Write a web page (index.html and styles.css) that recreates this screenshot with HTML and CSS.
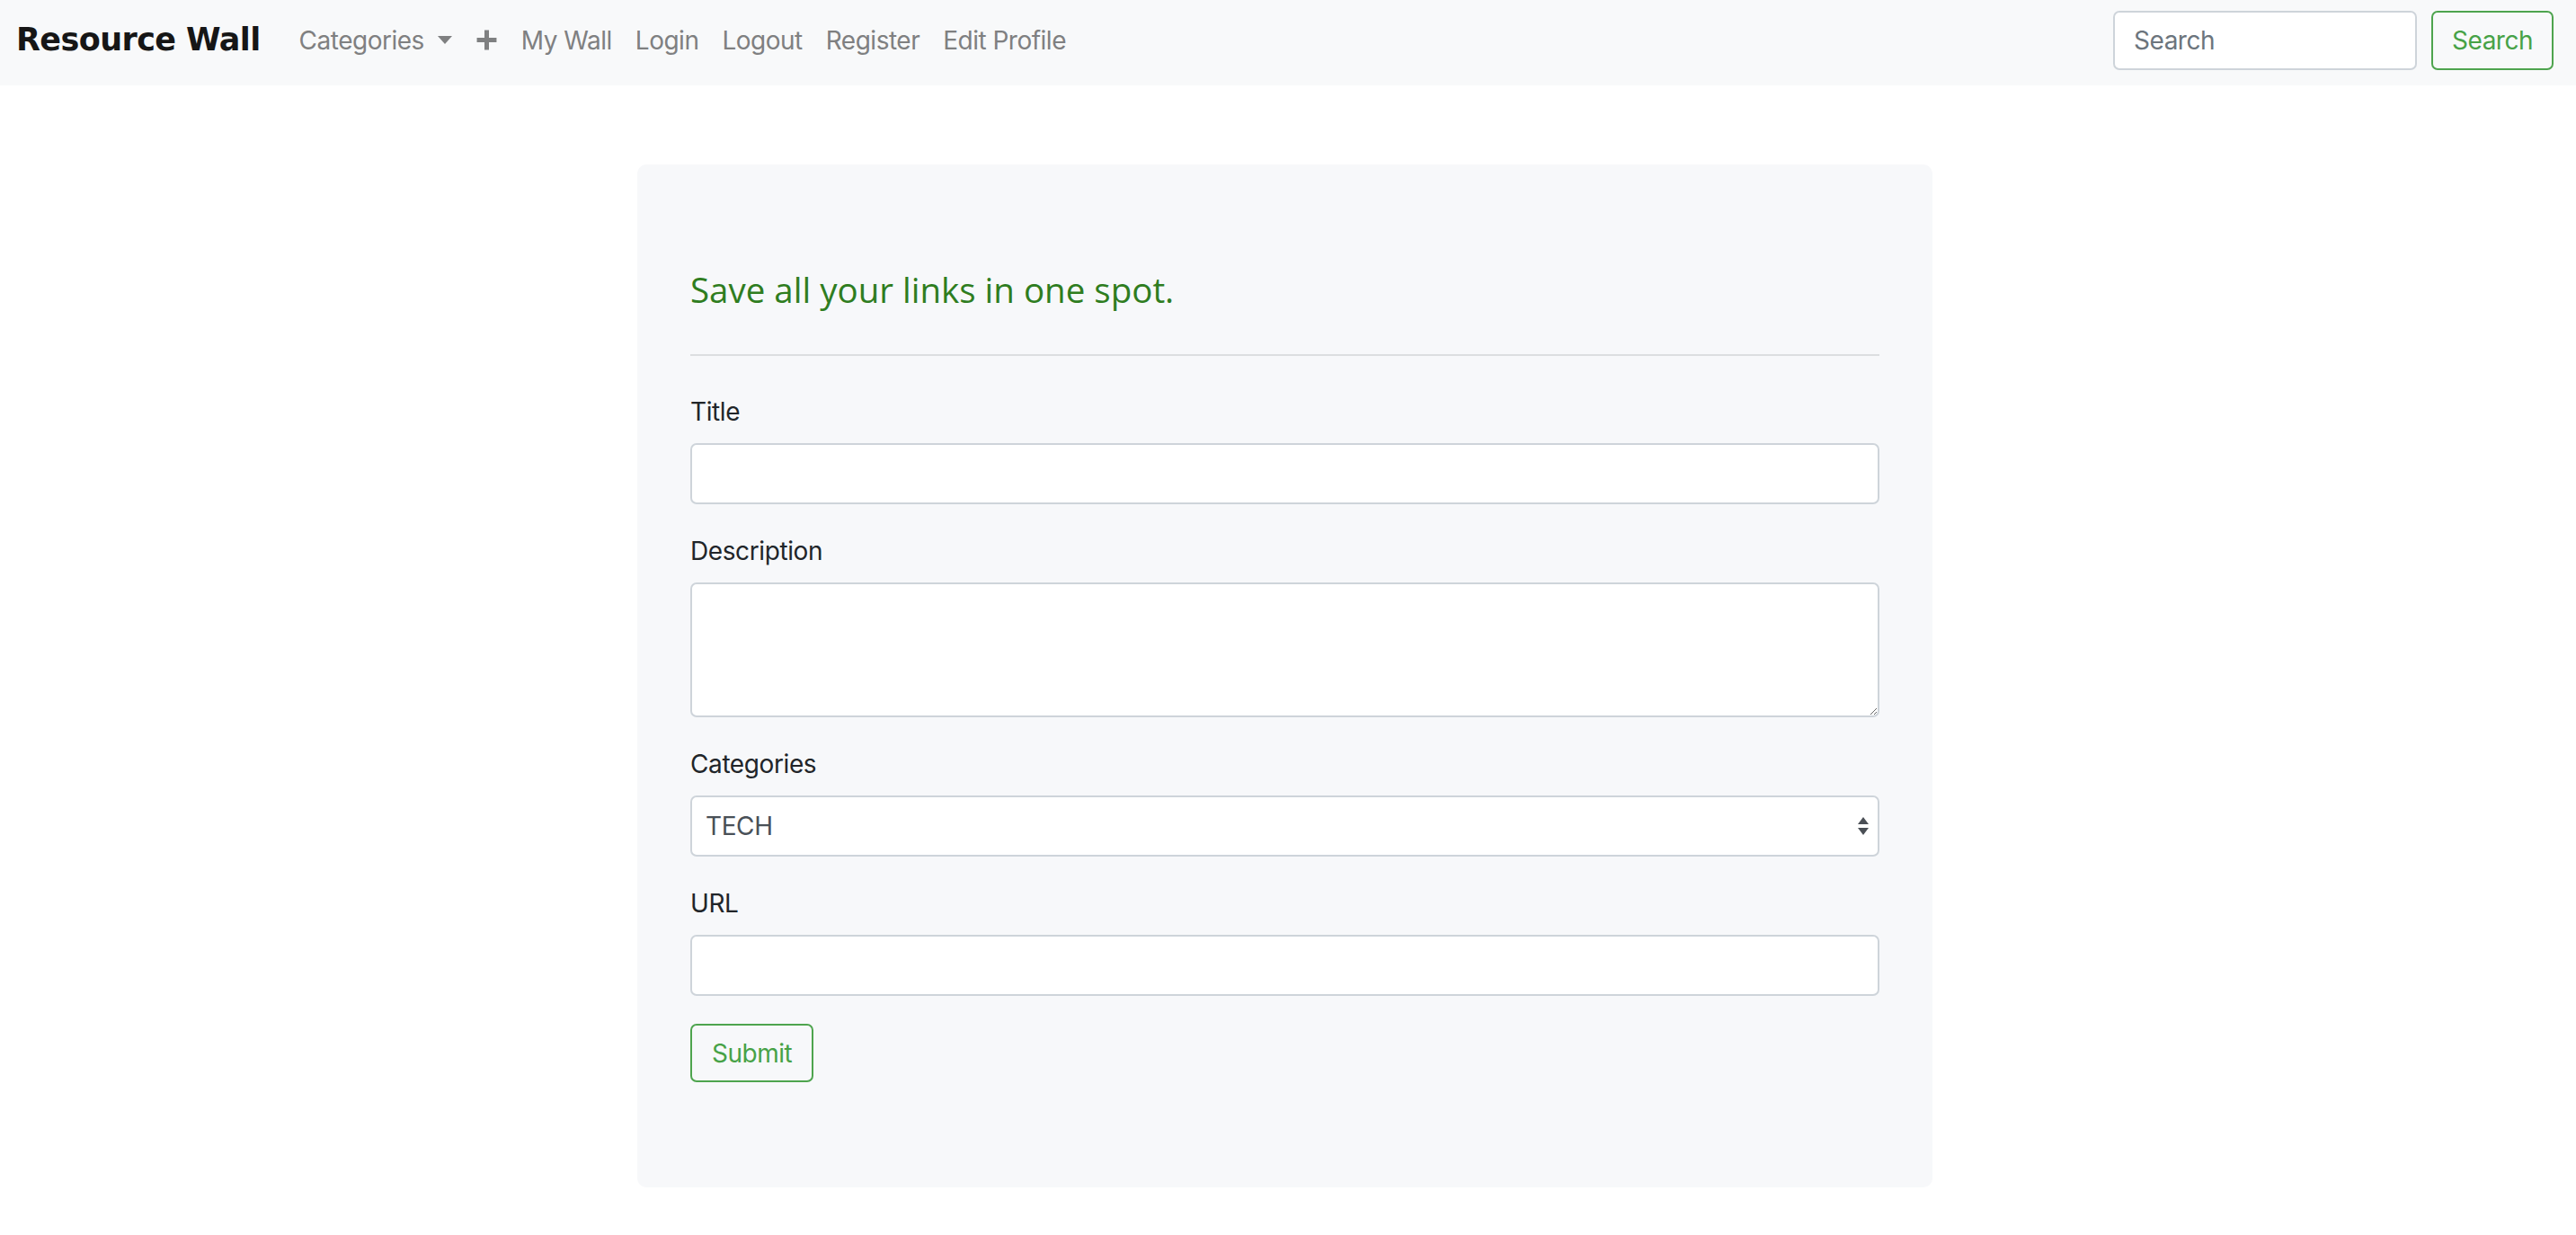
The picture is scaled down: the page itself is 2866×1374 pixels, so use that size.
FILE: index.html
```html
<!DOCTYPE html>
<html lang="en">
<head>
<meta charset="utf-8">
<title>Resource Wall</title>
<link rel="stylesheet" href="styles.css">
</head>
<body>
<nav class="navbar">
  <a class="brand" href="#">Resource Wall</a>
  <ul class="nav">
    <li><a class="nav-link dropdown" href="#">Categories<span class="caret"></span></a></li>
    <li><a class="nav-link plus" href="#" aria-label="Add"><svg width="25" height="25" viewBox="0 0 24 24"><path d="M9.6 1.5h4.8v8.1h8.1v4.8h-8.1v8.1h-4.8v-8.1h-8.1v-4.8h8.1z" fill="#7f8081"/></svg></a></li>
    <li><a class="nav-link" href="#">My Wall</a></li>
    <li><a class="nav-link" href="#">Login</a></li>
    <li><a class="nav-link" href="#">Logout</a></li>
    <li><a class="nav-link" href="#">Register</a></li>
    <li><a class="nav-link" href="#">Edit Profile</a></li>
  </ul>
  <form class="search-form">
    <input class="search-input" type="text" placeholder="Search">
    <button class="btn btn-outline" type="button">Search</button>
  </form>
</nav>

<main class="container">
  <section class="card">
    <h5 class="card-title">Save all your links in one spot.</h5>
    <hr class="divider">
    <form class="resource-form">
      <div class="form-group">
        <label class="label">Title</label>
        <input class="form-control" type="text">
      </div>
      <div class="form-group">
        <label class="label">Description</label>
        <textarea class="form-control textarea"></textarea>
      </div>
      <div class="form-group">
        <label class="label">Categories</label>
        <div class="select-wrap">
          <select class="form-control select">
            <option>TECH</option>
          </select>
          <svg class="select-arrows" width="14" height="22" viewBox="0 0 14 22"><path d="M7 1L13 9H1z" fill="#4a4f55"/><path d="M1 13H13L7 21z" fill="#4a4f55"/></svg>
        </div>
      </div>
      <div class="form-group">
        <label class="label">URL</label>
        <input class="form-control" type="text">
      </div>
      <button class="btn btn-outline submit" type="button">Submit</button>
    </form>
  </section>
</main>
</body>
</html>
```

FILE: styles.css
```css
* { box-sizing: border-box; }

html, body {
  margin: 0;
  padding: 0;
  background: #ffffff;
  font-family: Inter, "Noto Sans", "Liberation Sans", sans-serif;
  font-size: 28px;
  color: #212529;
}

.navbar {
  display: flex;
  align-items: center;
  height: 95px;
  padding: 0 25px 6px 18px;
  background: #f8f9fa;
}

.brand {
  font-family: "DejaVu Sans", "Open Sans", sans-serif;
  font-weight: 700;
  font-size: 35px;
  letter-spacing: -0.6px;
  color: #161616;
  text-decoration: none;
  margin-right: 30px;
  line-height: 1;
}

.nav {
  display: flex;
  align-items: center;
  list-style: none;
  margin: 0;
  padding: 0;
  flex: 1;
}

.nav-link {
  display: flex;
  align-items: center;
  padding: 14px 13px;
  color: #7f8081;
  text-decoration: none;
  font-size: 28px;
  letter-spacing: -0.5px;
  line-height: 42px;
}

.caret {
  display: inline-block;
  margin-left: 15px;
  width: 0;
  height: 0;
  border-left: 8px solid transparent;
  border-right: 8px solid transparent;
  border-top: 9px solid #7f8081;
}

.plus svg { display: block; }

.search-form {
  display: flex;
  align-items: center;
  gap: 16px;
}

.search-input {
  width: 338px;
  height: 66px;
  padding: 10px 21px;
  font-family: inherit;
  font-size: 28px;
  letter-spacing: -0.5px;
  color: #495057;
  background: #fff;
  border: 2px solid #ced4da;
  border-radius: 7px;
  outline: none;
}

.search-input::placeholder { color: #6c757d; }

.btn {
  font-family: inherit;
  font-size: 28px;
  letter-spacing: -0.5px;
  height: 66px;
  padding: 0 21px;
  border-radius: 7px;
  background: transparent;
  cursor: pointer;
}

.btn-outline {
  color: #47a247;
  border: 2px solid #4ea44e;
}

.container {
  padding-top: 88px;
  padding-bottom: 56px;
}

.card {
  width: 1441px;
  margin: 0 0 0 calc(50% - 724px);
  background: #f7f8fa;
  border-radius: 10px;
  padding: 118px 59px 117px 59px;
}

.card-title {
  margin: 0;
  font-family: "Open Sans", "Noto Sans", sans-serif;
  font-weight: 500;
  font-size: 38.5px;
  line-height: 42px;
  color: #2f7d1f;
}

.divider {
  margin: 51px 0 41px 0;
  border: 0;
  border-top: 2px solid #dcdee0;
}

.form-group {
  display: flex;
  flex-direction: column;
  margin-bottom: 31px;
}

.label {
  font-size: 28px;
  line-height: 42px;
  letter-spacing: -0.4px;
  margin-bottom: 14px;
  color: #212529;
}

.form-control {
  width: 100%;
  height: 68px;
  padding: 10px 15px;
  font-family: inherit;
  font-size: 28px;
  color: #495057;
  background: #fff;
  border: 2px solid #ced4da;
  border-radius: 7px;
  outline: none;
}

.textarea {
  height: 150px;
  resize: vertical;
}

.select-wrap {
  position: relative;
}

.select {
  appearance: none;
  -webkit-appearance: none;
  letter-spacing: -0.4px;
}

.select-arrows {
  position: absolute;
  right: 11px;
  top: 23px;
  pointer-events: none;
}

.submit {
  height: 65px;
  padding: 0 22px;
}
```
